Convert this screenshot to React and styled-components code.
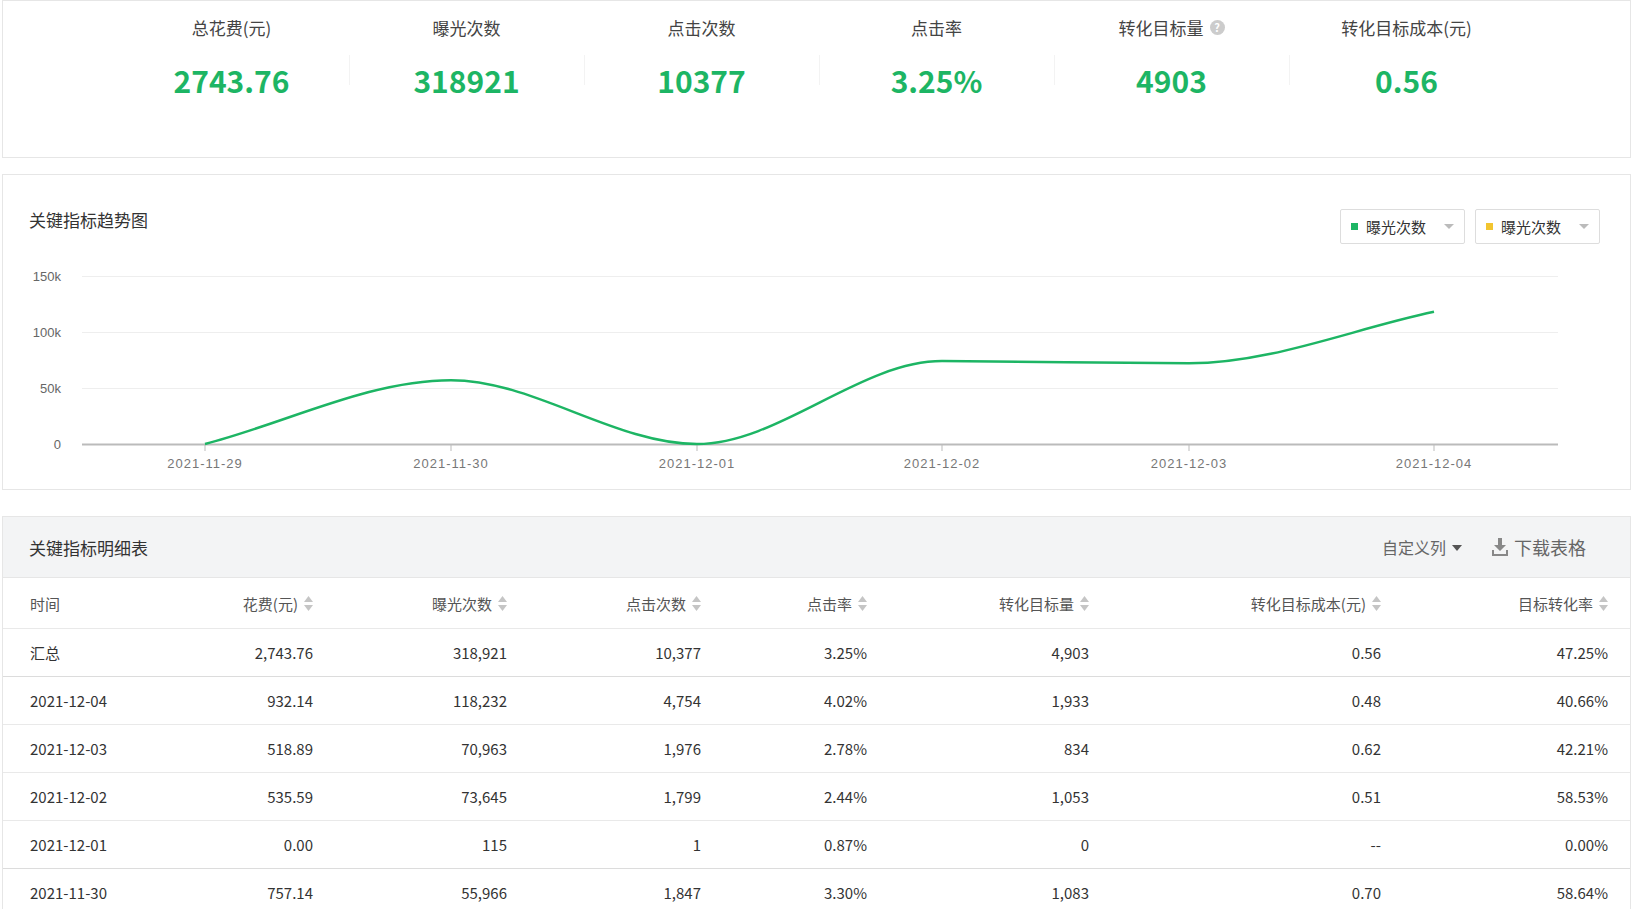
import React from 'react'
import styled, { createGlobalStyle } from 'styled-components'

const Global = createGlobalStyle`
  body { margin: 0; background: #fff; font-family: "Noto Sans CJK SC", "Noto Sans", sans-serif; color: #333; }
`

const stats = [
  ['总花费(元)', '2743.76'],
  ['曝光次数', '318921'],
  ['点击次数', '10377'],
  ['点击率', '3.25%'],
  ['转化目标量', '4903', true],
  ['转化目标成本(元)', '0.56'],
]

const cols = ['时间', '花费(元)', '曝光次数', '点击次数', '点击率', '转化目标量', '转化目标成本(元)', '目标转化率']
const rows = [
  ['汇总', '2,743.76', '318,921', '10,377', '3.25%', '4,903', '0.56', '47.25%'],
  ['2021-12-04', '932.14', '118,232', '4,754', '4.02%', '1,933', '0.48', '40.66%'],
  ['2021-12-03', '518.89', '70,963', '1,976', '2.78%', '834', '0.62', '42.21%'],
  ['2021-12-02', '535.59', '73,645', '1,799', '2.44%', '1,053', '0.51', '58.53%'],
  ['2021-12-01', '0.00', '115', '1', '0.87%', '0', '--', '0.00%'],
  ['2021-11-30', '757.14', '55,966', '1,847', '3.30%', '1,083', '0.70', '58.64%'],
]

const dates = ['2021-11-29', '2021-11-30', '2021-12-01', '2021-12-02', '2021-12-03', '2021-12-04']
const xs = [202, 448, 694, 939, 1186, 1431]
const vals = [0, 57, 0, 74, 72, 118]
const yOf = v => 181 - (v / 150) * 168

// monotone cubic through the points
function curve() {
  const p = xs.map((x, i) => [x, yOf(vals[i])])
  const n = p.length
  const sec = []
  for (let i = 0; i < n - 1; i++) sec.push((p[i + 1][1] - p[i][1]) / (p[i + 1][0] - p[i][0]))
  const m = p.map((_, i) => {
    if (i === 0) return sec[0]
    if (i === n - 1) return sec[n - 2]
    if (sec[i - 1] * sec[i] <= 0) return 0
    return (sec[i - 1] + sec[i]) / 2
  })
  let d = `M${p[0][0]},${p[0][1]}`
  for (let i = 0; i < n - 1; i++) {
    const h = (p[i + 1][0] - p[i][0]) / 3
    d += ` C${p[i][0] + h},${p[i][1] + m[i] * h} ${p[i + 1][0] - h},${p[i + 1][1] - m[i + 1] * h} ${p[i + 1][0]},${p[i + 1][1]}`
  }
  return d
}

const Page = styled.div`
  width: 1633px;
  padding: 0 2px;
  box-sizing: border-box;
`
const Card = styled.section`
  border: 1px solid #e6e6e6;
  background: #fff;
  margin-bottom: ${p => p.$gap || 0}px;
`
const StatRow = styled.div`
  display: grid;
  grid-template-columns: repeat(6, 235px);
  padding: 14px 0 0 111px;
  height: 156px;
  box-sizing: border-box;
`
const Stat = styled.div`
  text-align: center;
  position: relative;
  & + &::before {
    content: '';
    position: absolute;
    left: 0;
    top: 40px;
    height: 30px;
    border-left: 1px solid #f3f3f3;
  }
`
const StatLabel = styled.div`
  font-size: 17px;
  color: #444;
  display: flex;
  justify-content: center;
  align-items: center;
  gap: 6px;
`
const Help = styled.span`
  width: 15px;
  height: 15px;
  border-radius: 50%;
  background: #ccc;
  color: #fff;
  font-size: 11px;
  line-height: 15px;
  font-weight: bold;
`
const StatValue = styled.div`
  margin-top: 18px;
  font-size: 30px;
  font-weight: bold;
  color: #1db564;
`
const ChartHead = styled.div`
  display: flex;
  justify-content: space-between;
  align-items: center;
  padding: 24px 30px 0 26px;
  height: 64px;
  box-sizing: border-box;
`
const Title = styled.div`
  font-size: 17px;
  color: #333;
`
const Selects = styled.div`
  display: flex;
  gap: 10px;
  margin-top: 15px;
`
const Select = styled.div`
  display: flex;
  align-items: center;
  gap: 8px;
  height: 33px;
  padding: 0 10px;
  border: 1px solid #ddd;
  border-radius: 2px;
  font-size: 15px;
  color: #333;
  &::before {
    content: '';
    width: 7px;
    height: 7px;
    background: ${p => p.$color};
  }
  &::after {
    content: '';
    margin-left: 10px;
    border: 5px solid transparent;
    border-top-color: #bbb;
    margin-top: 5px;
  }
`
const Plot = styled.svg`
  display: block;
  margin-top: 24px;
`
const TableHead = styled.div`
  display: flex;
  justify-content: space-between;
  align-items: center;
  height: 60px;
  background: #f3f4f5;
  padding: 0 44px 0 26px;
  border-bottom: 1px solid #e6e6e6;
`
const Tools = styled.div`
  display: flex;
  align-items: center;
  gap: 30px;
  font-size: 16px;
  color: #666;
`
const Tool = styled.span`
  display: flex;
  align-items: center;
  gap: 6px;
  font-size: ${p => p.$big ? 18 : 16}px;
`
const Caret = styled.span`
  border: 5px solid transparent;
  border-top: 6px solid #555;
  margin-top: 6px;
`
const Row = styled.div`
  display: grid;
  grid-template-columns: 140px 143px 194px 194px 166px 222px 292px 227px;
  padding-left: 27px;
  height: ${p => p.$head ? 50 : 47}px;
  align-items: center;
  border-bottom: 1px solid ${p => p.$strong ? '#dcdcdc' : '#e9e9e9'};
  font-size: 15px;
  color: #333;
`
const Cell = styled.div`
  display: flex;
  justify-content: ${p => p.$left ? 'flex-start' : 'flex-end'};
  align-items: center;
  gap: 6px;
  color: ${p => p.$head ? '#555' : '#333'};
`
const Sort = () => (
  <svg width="9" height="15" viewBox="0 0 9 15">
    <path d="M4.5 0 L9 6 H0 Z" fill="#c5c5c5" />
    <path d="M4.5 15 L9 9 H0 Z" fill="#c5c5c5" />
  </svg>
)

export default function App() {
  return (
    <Page>
      <Global />
      <Card $gap={16}>
        <StatRow>
          {stats.map(([l, v, h]) => (
            <Stat key={l}>
              <StatLabel>{l}{h && <Help>?</Help>}</StatLabel>
              <StatValue>{v}</StatValue>
            </Stat>
          ))}
        </StatRow>
      </Card>
      <Card $gap={26}>
        <ChartHead>
          <Title>关键指标趋势图</Title>
          <Selects>
            <Select $color="#1db564">曝光次数</Select>
            <Select $color="#f2c530">曝光次数</Select>
          </Selects>
        </ChartHead>
        <Plot width="1627" height="226">
          {[150, 100, 50, 0].map(v => (
            <g key={v}>
              <line x1="79" x2="1555" y1={yOf(v) + 0.5} y2={yOf(v) + 0.5} stroke={v ? '#eee' : '#bbb'} strokeWidth={v ? 1 : 2} />
              <text x="58" y={yOf(v) + 5} textAnchor="end" fontSize="13" fill="#666" fontFamily="Liberation Sans, sans-serif">{v ? v + 'k' : '0'}</text>
            </g>
          ))}
          {xs.map((x, i) => (
            <g key={x}>
              <line x1={x} x2={x} y1="182" y2="188" stroke="#bbb" />
              <text x={x} y="205" textAnchor="middle" fontSize="13" fill="#777" letterSpacing="1" fontFamily="Liberation Sans, sans-serif">{dates[i]}</text>
            </g>
          ))}
          <path d={curve()} fill="none" stroke="#1db564" strokeWidth="2.5" />
        </Plot>
      </Card>
      <Card>
        <TableHead>
          <Title>关键指标明细表</Title>
          <Tools>
            <Tool>自定义列 <Caret /></Tool>
            <Tool $big>
              <svg width="16" height="18" viewBox="0 0 16 18">
                <path d="M6 0 H10 V7 H14 L8 13 L2 7 H6 Z" fill="#888" />
                <path d="M0 12 H2 V16 H14 V12 H16 V18 H0 Z" fill="#888" />
              </svg>
              下载表格
            </Tool>
          </Tools>
        </TableHead>
        <Row $head>
          {cols.map((c, i) => (
            <Cell key={c} $head $left={i === 0}>{c}{i > 0 && <Sort />}</Cell>
          ))}
        </Row>
        {rows.map((r, ri) => (
          <Row key={r[0]} $strong={ri === 0 || ri === 4}>
            {r.map((v, i) => <Cell key={i} $left={i === 0}>{v}</Cell>)}
          </Row>
        ))}
      </Card>
    </Page>
  )
}
